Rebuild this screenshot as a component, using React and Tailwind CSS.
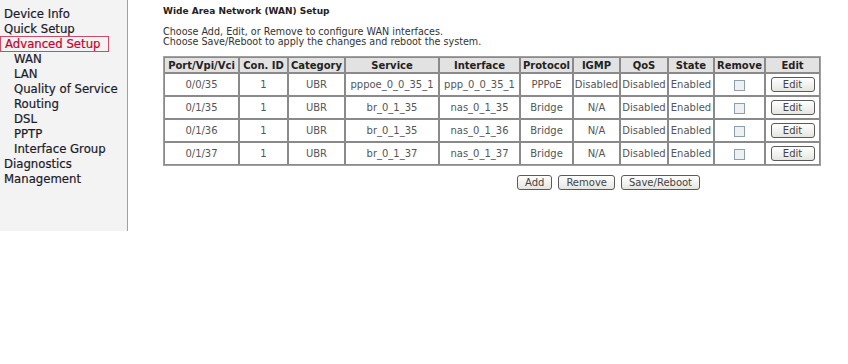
const menu = [
  { label: 'Device Info' },
  { label: 'Quick Setup' },
  { label: 'Advanced Setup', active: true },
  { label: 'WAN', sub: true },
  { label: 'LAN', sub: true },
  { label: 'Quality of Service', sub: true },
  { label: 'Routing', sub: true },
  { label: 'DSL', sub: true },
  { label: 'PPTP', sub: true },
  { label: 'Interface Group', sub: true },
  { label: 'Diagnostics' },
  { label: 'Management' },
]

const cols = [
  ['Port/Vpi/Vci', 75],
  ['Con. ID', 49],
  ['Category', 57],
  ['Service', 94],
  ['Interface', 81],
  ['Protocol', 53],
  ['IGMP', 47],
  ['QoS', 48],
  ['State', 46],
  ['Remove', 51],
  ['Edit', 55],
]

const rows = [
  ['0/0/35', '1', 'UBR', 'pppoe_0_0_35_1', 'ppp_0_0_35_1', 'PPPoE', 'Disabled', 'Disabled', 'Enabled'],
  ['0/1/35', '1', 'UBR', 'br_0_1_35', 'nas_0_1_35', 'Bridge', 'N/A', 'Disabled', 'Enabled'],
  ['0/1/36', '1', 'UBR', 'br_0_1_35', 'nas_0_1_36', 'Bridge', 'N/A', 'Disabled', 'Enabled'],
  ['0/1/37', '1', 'UBR', 'br_0_1_37', 'nas_0_1_37', 'Bridge', 'N/A', 'Disabled', 'Enabled'],
]

function Btn({ children, className = '' }) {
  return (
    <button
      className={`h-[15px] rounded-[3px] border border-[#5a5a5a] bg-gradient-to-b from-white to-[#e6e6e0] px-[7px] text-[10px] leading-[13px] text-[#444] ${className}`}
    >
      {children}
    </button>
  )
}

export default function App() {
  return (
    <div
      className="flex h-[364px] w-[848px] bg-white text-[#222]"
      style={{ fontFamily: '"DejaVu Sans", Verdana, sans-serif' }}
    >
      <div className="h-[231px] w-[128px] shrink-0 border-r border-[#b39a80] bg-[#f3f3f3] pt-[1px]">
        {menu.map((m) => (
          <div key={m.label} className="h-[15px]">
            <span
              className={`inline-block text-[11.7px] leading-[14px] [-webkit-text-stroke:0.2px] ${m.sub ? 'pl-[14px]' : 'pl-[4px]'} ${
                m.active ? 'w-[109px] border border-[#d24a6a] pl-[3px] text-[#c8002d]' : 'text-[#1a1a2a]'
              }`}
            >
              {m.label}
            </span>
          </div>
        ))}
      </div>
      <div className="pl-[35px] pt-[6px]">
        <div className="text-[9px] font-bold leading-[11px]">Wide Area Network (WAN) Setup</div>
        <div className="mt-[10px] text-[9.6px] leading-[10px] text-[#333]">
          <div>Choose Add, Edit, or Remove to configure WAN interfaces.</div>
          <div>Choose Save/Reboot to apply the changes and reboot the system.</div>
        </div>
        <table className="mt-[9px] table-fixed border-separate border-spacing-0 border border-[#a0a0a0] text-[10px] text-[#555]">
          <colgroup>
            {cols.map(([c, w]) => (
              <col key={c} style={{ width: w }} />
            ))}
          </colgroup>
          <thead>
            <tr className="h-[16px] bg-[#e2e2e2]">
              {cols.map(([c]) => (
                <th key={c} className="whitespace-nowrap border border-[#8a8a8a] p-0 text-center font-bold leading-[13px] text-[#222]">
                  {c}
                </th>
              ))}
            </tr>
          </thead>
          <tbody>
            {rows.map((r, i) => (
              <tr key={i} className="h-[23px]">
                {r.map((v, j) => (
                  <td key={j} className="whitespace-nowrap border border-[#8a8a8a] p-0 text-center">
                    {v}
                  </td>
                ))}
                <td className="border border-[#8a8a8a] p-0 text-center">
                  <span className="inline-block h-[11px] w-[11px] border border-[#8aa0b0] bg-[#f0f0f0] align-middle" />
                </td>
                <td className="border border-[#8a8a8a] p-0 text-center">
                  <Btn className="w-[44px]">Edit</Btn>
                </td>
              </tr>
            ))}
          </tbody>
        </table>
        <div className="mt-[9px] flex gap-[6px] pl-[354px]">
          <Btn>Add</Btn>
          <Btn>Remove</Btn>
          <Btn>Save/Reboot</Btn>
        </div>
      </div>
    </div>
  )
}
